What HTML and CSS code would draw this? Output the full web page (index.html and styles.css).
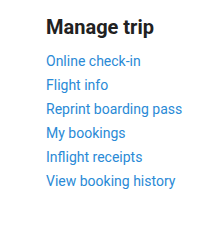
FILE: index.html
```html
<!DOCTYPE html>
<html lang="en">
<head>
  <meta charset="UTF-8">
  <meta name="viewport" content="width=device-width, initial-scale=1">
  <title>Manage trip</title>
  <link rel="stylesheet" href="styles.css">
</head>
<body>
  <div class="trip-menu">
    <h2>Manage trip</h2>
    <ul>
      <li><a href="#">Online check-in</a></li>
      <li><a href="#">Flight info</a></li>
      <li><a href="#">Reprint boarding pass</a></li>
      <li><a href="#">My bookings</a></li>
      <li><a href="#">Inflight receipts</a></li>
      <li><a href="#">View booking history</a></li>
    </ul>
  </div>
</body>
</html>
```

FILE: styles.css
```css
* {
  box-sizing: border-box;
  font-family: Roboto, 'Liberation Sans', sans-serif;
}

body {
  margin: 0;
  padding: 0;
  background: #ffffff;
}

.trip-menu {
  padding: 15px 0 0 46px;
}

h2 {
  margin: 0 0 10px;
  font-size: 20px;
  line-height: 24px;
  font-weight: 700;
  color: #212121;
}

ul {
  list-style: none;
  margin: 0;
  padding: 0;
}

li {
  font-size: 14px;
  line-height: 24px;
}

a {
  color: #2a8ad6;
  text-decoration: none;
}
```
